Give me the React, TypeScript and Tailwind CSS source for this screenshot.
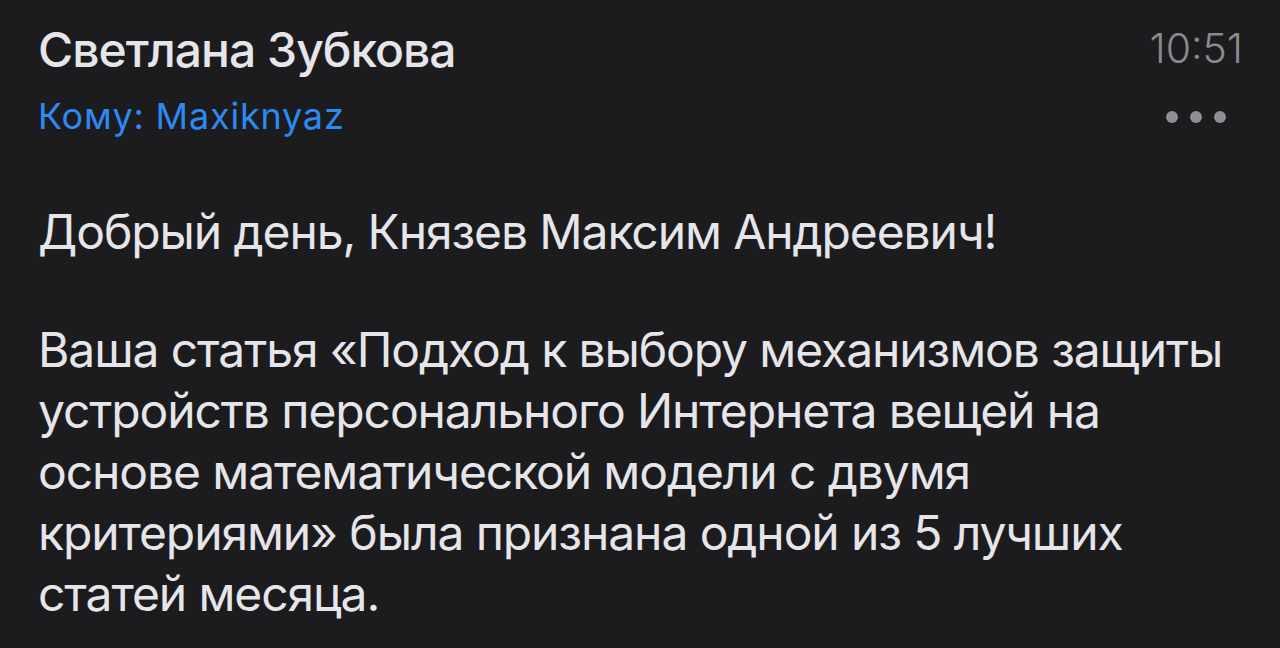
import React from 'react';

const bodyLines = [
  'Ваша статья «Подход к выбору механизмов защиты',
  'устройств персонального Интернета вещей на',
  'основе математической модели с двумя',
  'критериями» была признана одной из 5 лучших',
  'статей месяца.',
];

export default function App() {
  return (
    <div
      className="w-[1280px] h-[648px] overflow-hidden bg-[#1c1c1e] text-[#e5e5ea]"
      style={{ fontFamily: 'Inter, "Noto Sans", sans-serif' }}
    >
      <div className="flex items-start justify-between pl-[38px] pr-[37px]">
        <div className="flex flex-col">
          <div className="text-[48px] leading-[58px] font-medium tracking-[-1px] mt-[21px] text-[#e5e5ea]">
            Светлана Зубкова
          </div>
          <div className="text-[36px] leading-[44px] text-[#2c8af3] mt-[15px] tracking-[0.8px]">
            Кому: Maxiknyaz
          </div>
        </div>
        <div className="flex flex-col items-end">
          <div className="text-[41px] leading-[50px] text-[#8a8a8f] mt-[23px] font-light">10:51</div>
          <div className="flex gap-[12px] mt-[38px] mr-[17px]">
            <span className="w-[12px] h-[12px] rounded-full bg-[#8e8e93]" />
            <span className="w-[12px] h-[12px] rounded-full bg-[#8e8e93]" />
            <span className="w-[12px] h-[12px] rounded-full bg-[#8e8e93]" />
          </div>
        </div>
      </div>

      <div className="pl-[38px] mt-[63px] text-[48px] leading-[61px] tracking-[-1.1px]">
        <p className="whitespace-nowrap">Добрый день, Князев Максим Андреевич!</p>
        <div className="mt-[57px]">
          {bodyLines.map((line) => (
            <p key={line} className="whitespace-nowrap">
              {line}
            </p>
          ))}
        </div>
      </div>
    </div>
  );
}
